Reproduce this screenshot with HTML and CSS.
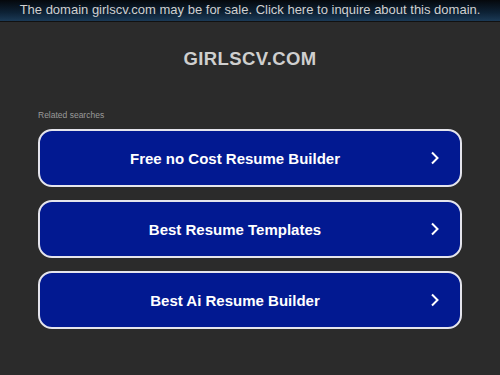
FILE: index.html
```html
<!DOCTYPE html>
<html>
<head>
<meta charset="utf-8">
<link rel="stylesheet" href="styles.css">
</head>
<body>
<div class="topbar">The domain girlscv.com may be for sale. Click here to inquire about this domain.</div>
<div class="main">
  <h1 class="title">GIRLSCV.COM</h1>
  <div class="related">Related searches</div>
  <div class="list">
    <a class="btn" href="#"><span>Free no Cost Resume Builder</span><svg class="chev" width="10" height="14" viewBox="0 0 10 14"><path d="M2 1.5 L7.5 7 L2 12.5" fill="none" stroke="#fff" stroke-width="2"/></svg></a>
    <a class="btn" href="#"><span>Best Resume Templates</span><svg class="chev" width="10" height="14" viewBox="0 0 10 14"><path d="M2 1.5 L7.5 7 L2 12.5" fill="none" stroke="#fff" stroke-width="2"/></svg></a>
    <a class="btn" href="#"><span>Best Ai Resume Builder</span><svg class="chev" width="10" height="14" viewBox="0 0 10 14"><path d="M2 1.5 L7.5 7 L2 12.5" fill="none" stroke="#fff" stroke-width="2"/></svg></a>
  </div>
</div>
</body>
</html>
```
FILE: styles.css
```css
html, body {
  margin: 0;
  padding: 0;
  background: #2b2b2b;
  font-family: "Liberation Sans", Arial, sans-serif;
}
.topbar {
  height: 21px;
  line-height: 19px;
  text-align: center;
  font-size: 13px;
  color: #d0d0d0;
  letter-spacing: 0;
  background: linear-gradient(to bottom, #05080c 0%, #0d2236 60%, #1b3a56 100%);
  border-bottom: 1px solid #111;
}
.main {
  padding: 0 38px;
}
.title {
  margin: 26px 0 0;
  text-align: center;
  font-size: 18.5px;
  line-height: 22px;
  font-weight: bold;
  color: #cfcfcf;
  letter-spacing: 0.4px;
}
.related {
  margin-top: 39px;
  font-size: 8.5px;
  line-height: 12px;
  color: #9a9a9a;
}
.list {
  margin-top: 8px;
  display: flex;
  flex-direction: column;
  gap: 13px;
}
.btn {
  position: relative;
  display: flex;
  align-items: center;
  justify-content: center;
  height: 54px;
  padding-right: 30px;
  border: 2px solid #e4e4ec;
  border-radius: 14px;
  background: #021991;
  color: #fff;
  text-decoration: none;
  font-size: 15px;
  font-weight: bold;
}
.chev {
  position: absolute;
  right: 20px;
  top: 20px;
}
```
